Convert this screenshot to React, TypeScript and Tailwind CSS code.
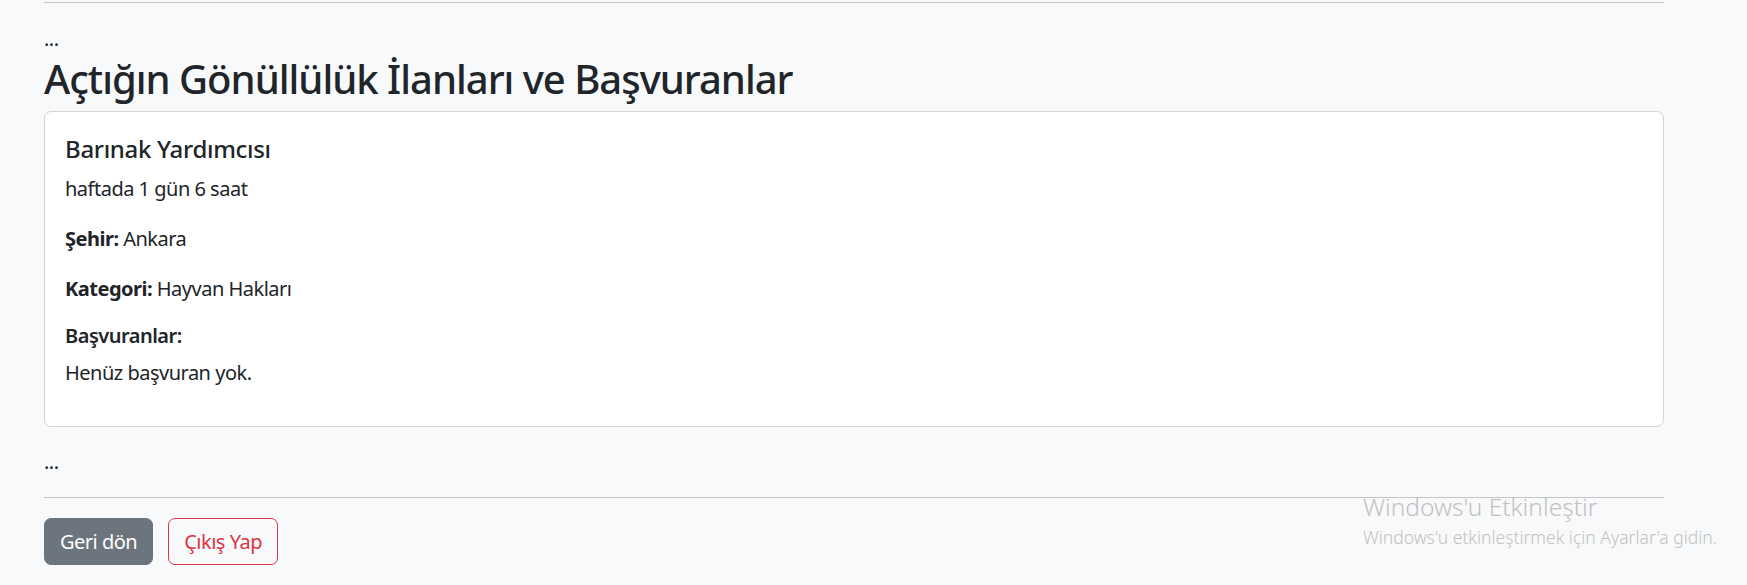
export default function App() {
  return (
    <div
      className="relative min-h-screen bg-[#f8f9fa] text-[#212529] text-[20px] leading-[30px] tracking-[-0.5px]"
      style={{ fontFamily: '"Noto Sans", "Open Sans", sans-serif' }}
    >
      <div className="ml-[44px] w-[1620px] pt-[2px]">
        <hr className="border-0 border-t border-[#c4c5c6] mb-[21px]" />

        <p>...</p>
        <h1 className="text-[40px] leading-[50px] font-medium tracking-[-1px] mb-[7px]">
          Açtığın Gönüllülük İlanları ve Başvuranlar
        </h1>

        {/* ilan kartı */}
        <div className="bg-white border border-[#d4d4d4] rounded-[7px] px-[20px] pt-[22px] pb-[18px]">
          <h5 className="text-[24px] leading-[29px] font-medium tracking-[-0.3px] mb-[11px]">Barınak Yardımcısı</h5>
          <p className="mb-[20px]">haftada 1 gün 6 saat</p>
          <p className="mb-[20px]">
            <strong className="font-bold">Şehir:</strong> Ankara
          </p>
          <p className="mb-[20px]">
            <strong className="font-bold">Kategori:</strong> Hayvan Hakları
          </p>
          <h6 className="text-[20px] leading-[24px] font-semibold mb-[10px]">Başvuranlar:</h6>
          <p className="mb-[20px]">Henüz başvuran yok.</p>
        </div>

        <p className="mt-[20px] mb-[20px]">...</p>
        <hr className="border-0 border-t border-[#c4c5c6] mb-[20px]" />

        <div className="flex gap-[15px]">
          <button className="bg-[#6c757d] text-white border border-[#6c757d] rounded-[7px] px-[15px] py-[7.5px] leading-[30px]">
            Geri dön
          </button>
          <button className="bg-transparent text-[#dc3545] border border-[#dc3545] rounded-[7px] px-[15px] py-[7.5px] leading-[30px]">
            Çıkış Yap
          </button>
        </div>
      </div>

      {/* windows watermark */}
      <div className="absolute left-[1363px] top-[492px] text-[#c2c2c2] font-light tracking-normal pointer-events-none">
        <div className="text-[24.5px] leading-[30px]">Windows'u Etkinleştir</div>
        <div className="text-[17.5px] leading-[22px] mt-[4px]">Windows'u etkinleştirmek için Ayarlar'a gidin.</div>
      </div>
    </div>
  );
}
